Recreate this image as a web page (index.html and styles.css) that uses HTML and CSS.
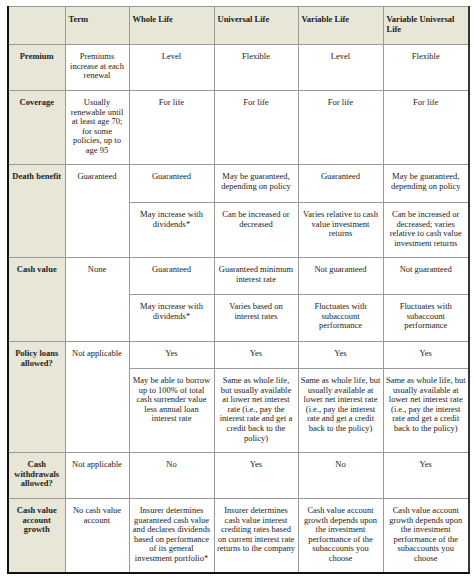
FILE: index.html
```html
<!DOCTYPE html>
<html>
<head>
<meta charset="utf-8">
<link rel="stylesheet" href="styles.css">
</head>
<body>
<table class="cmp">
<colgroup>
<col class="c0"><col class="c1"><col class="c2"><col class="c3"><col class="c4"><col class="c5">
</colgroup>
<tr class="h-head">
<th class="corner"></th>
<th>Term</th>
<th>Whole Life</th>
<th>Universal Life</th>
<th>Variable Life</th>
<th>Variable Universal<br>Life</th>
</tr>
<tr class="h-prem">
<td class="lab">Premium</td>
<td>Premiums<br>increase at each<br>renewal</td>
<td>Level</td>
<td>Flexible</td>
<td>Level</td>
<td>Flexible</td>
</tr>
<tr class="h-cov">
<td class="lab">Coverage</td>
<td>Usually<br>renewable until<br>at least age 70;<br>for some<br>policies, up to<br>age 95</td>
<td>For life</td>
<td>For life</td>
<td>For life</td>
<td>For life</td>
</tr>
<tr class="h-db1">
<td class="lab" rowspan="2">Death benefit</td>
<td rowspan="2">Guaranteed</td>
<td>Guaranteed</td>
<td>May be guaranteed,<br>depending on policy</td>
<td>Guaranteed</td>
<td>May be guaranteed,<br>depending on policy</td>
</tr>
<tr class="h-db2">
<td>May increase with<br>dividends*</td>
<td>Can be increased or<br>decreased</td>
<td>Varies relative to cash<br>value investment<br>returns</td>
<td>Can be increased or<br>decreased; varies<br>relative to cash value<br>investment returns</td>
</tr>
<tr class="h-cv1">
<td class="lab" rowspan="2">Cash value</td>
<td rowspan="2">None</td>
<td>Guaranteed</td>
<td>Guaranteed minimum<br>interest rate</td>
<td>Not guaranteed</td>
<td>Not guaranteed</td>
</tr>
<tr class="h-cv2">
<td>May increase with<br>dividends*</td>
<td>Varies based on<br>interest rates</td>
<td>Fluctuates with<br>subaccount<br>performance</td>
<td>Fluctuates with<br>subaccount<br>performance</td>
</tr>
<tr class="h-pl1">
<td class="lab" rowspan="2">Policy loans<br>allowed?</td>
<td rowspan="2">Not applicable</td>
<td>Yes</td>
<td>Yes</td>
<td>Yes</td>
<td>Yes</td>
</tr>
<tr class="h-pl2">
<td>May be able to borrow<br>up to 100% of total<br>cash surrender value<br>less annual loan<br>interest rate</td>
<td>Same as whole life,<br>but usually available<br>at lower net interest<br>rate (i.e., pay the<br>interest rate and get a<br>credit back to the<br>policy)</td>
<td>Same as whole life, but<br>usually available at<br>lower net interest rate<br>(i.e., pay the interest<br>rate and get a credit<br>back to the policy)</td>
<td>Same as whole life, but<br>usually available at<br>lower net interest rate<br>(i.e., pay the interest<br>rate and get a credit<br>back to the policy)</td>
</tr>
<tr class="h-cw">
<td class="lab">Cash<br>withdrawals<br>allowed?</td>
<td>Not applicable</td>
<td>No</td>
<td>Yes</td>
<td>No</td>
<td>Yes</td>
</tr>
<tr class="h-gr">
<td class="lab">Cash value<br>account<br>growth</td>
<td>No cash value<br>account</td>
<td>Insurer determines<br>guaranteed cash value<br>and declares dividends<br>based on performance<br>of its general<br>investment portfolio*</td>
<td>Insurer determines<br>cash value interest<br>crediting rates based<br>on current interest rate<br>returns to the company</td>
<td>Cash value account<br>growth depends upon<br>the investment<br>performance of the<br>subaccounts you<br>choose</td>
<td>Cash value account<br>growth depends upon<br>the investment<br>performance of the<br>subaccounts you<br>choose</td>
</tr>
</table>
</body>
</html>
```

FILE: styles.css
```css
html, body {
  margin: 0;
  padding: 0;
  background: #ffffff;
}
body {
  padding: 6px 0 0 7px;
  font-family: "Liberation Serif", "Times New Roman", serif;
  color: #222;
}
.cmp {
  border-collapse: collapse;
  table-layout: fixed;
  width: 462px;
  border-top: 1px solid #555;
  border-left: 2px solid #111;
  border-right: 2px solid #333;
  border-bottom: 2px solid #111;
  font-size: 8.5px;
  line-height: 9.6px;
}
.c0 { width: 57px; }
.c1 { width: 64px; }
.c2 { width: 85px; }
.c3 { width: 84px; }
.c4 { width: 85px; }
.c5 { width: 86px; }
.cmp th, .cmp td {
  border: 1px solid #9a9a9a;
  vertical-align: top;
  white-space: nowrap;
  overflow: hidden;
  padding: 7px 2px 2px 2px;
}
.cmp th {
  background: #e8e6d7;
  text-align: left;
  font-weight: bold;
  padding-left: 3px;
  padding-top: 8px;
}
.cmp td {
  text-align: center;
}
.cmp td.lab {
  background: #e8e6d7;
  font-weight: bold;
}
.h-head { height: 38px; }
.h-prem { height: 46px; }
.h-cov { height: 74px; }
.h-db1 { height: 38px; }
.h-db2 { height: 55px; }
.h-cv1 { height: 37px; }
.h-cv2 { height: 47px; }
.h-pl1 { height: 27px; }
.h-pl2 { height: 84px; }
.h-cw { height: 46px; }
.h-gr { height: 74px; }
```
